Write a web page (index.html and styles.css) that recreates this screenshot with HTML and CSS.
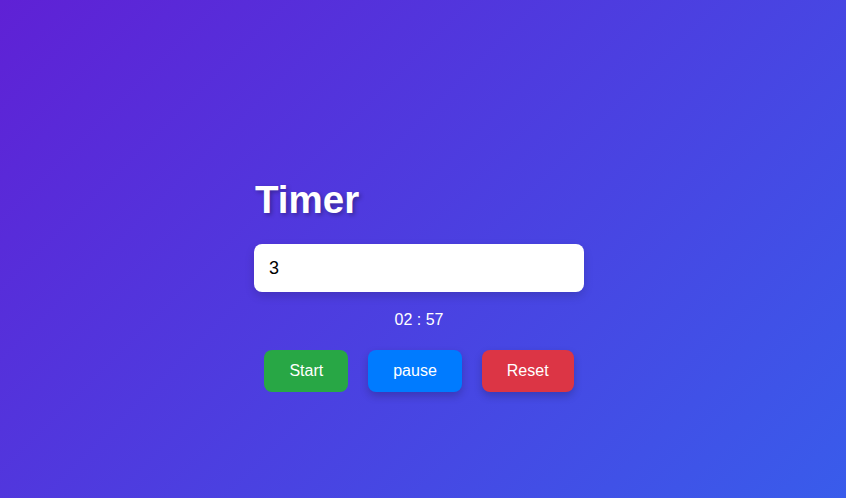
FILE: index.html
```html
<!DOCTYPE html>
<html lang="en">
<head>
<meta charset="utf-8">
<title>Timer</title>
<link rel="stylesheet" href="styles.css">
</head>
<body>
<div class="page">
  <div class="timer">
    <h1 class="title">Timer</h1>
    <input class="minutes" type="text" value="3">
    <p class="display">02 : 57</p>
    <div class="controls">
      <button class="btn btn-start">Start</button>
      <button class="btn btn-pause">pause</button>
      <button class="btn btn-reset">Reset</button>
    </div>
  </div>
</div>
</body>
</html>
```
FILE: styles.css
```css
html, body {
  margin: 0;
  height: 100%;
}
body {
  font-family: "Liberation Sans", Arial, sans-serif;
  background: linear-gradient(135deg, #5f21d5 0%, #395ceb 100%);
  color: #fff;
  overflow: hidden;
}
.page {
  padding: 178px 0 0 254px;
}
.timer {
  width: 330px;
  display: flex;
  flex-direction: column;
}
.title {
  margin: 0 0 22px 1px;
  font-size: 38.5px;
  font-weight: bold;
  line-height: 44px;
  text-shadow: 2px 2px 4px rgba(0, 0, 0, 0.3);
}
.minutes {
  box-sizing: border-box;
  width: 330px;
  height: 48px;
  margin: 0;
  padding: 0 15px;
  border: none;
  border-radius: 8px;
  background: #fff;
  color: #000;
  font-family: "Liberation Sans", Arial, sans-serif;
  font-size: 18px;
  outline: none;
  box-shadow: 0 4px 10px rgba(0, 0, 0, 0.15);
}
.display {
  margin: 19px 0 21px;
  text-align: center;
  font-size: 16px;
  line-height: 18px;
}
.controls {
  display: flex;
  justify-content: center;
  gap: 20px;
}
.btn {
  height: 42px;
  padding: 0 25px;
  border: none;
  border-radius: 8px;
  color: #fff;
  font-family: "Liberation Sans", Arial, sans-serif;
  font-size: 16px;
  cursor: pointer;
}
.btn-start {
  background: #28a745;
}
.btn-pause {
  background: #007bff;
  box-shadow: 0 4px 8px rgba(0, 0, 0, 0.2);
}
.btn-reset {
  background: #dc3545;
  box-shadow: 0 4px 8px rgba(0, 0, 0, 0.2);
}
```
